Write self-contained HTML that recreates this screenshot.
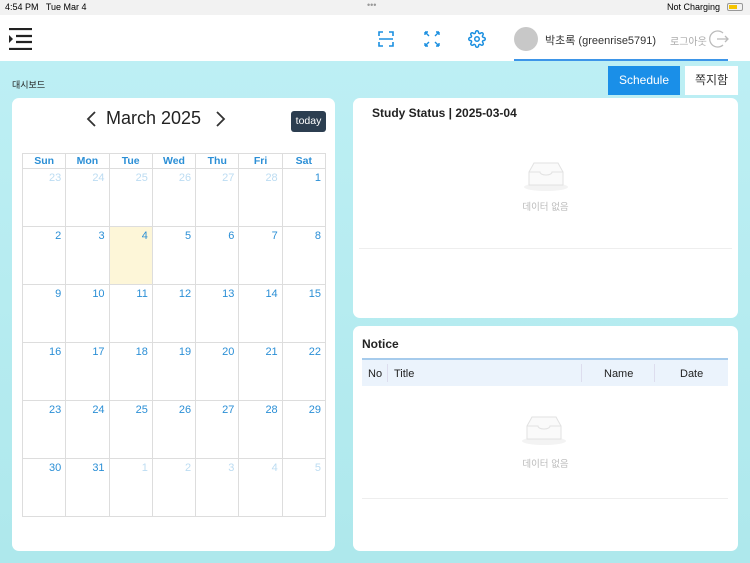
<!DOCTYPE html>
<html><head><meta charset="utf-8"><style>
*{margin:0;padding:0;box-sizing:border-box}
body{width:750px;height:563px;overflow:hidden;font-family:"Liberation Sans","Noto Sans CJK KR",sans-serif;background:linear-gradient(180deg,#bdeff4 60px,#aee8ec 563px);position:relative}
.status{position:absolute;left:0;top:0;width:750px;height:15px;background:#f2f2f2;font-size:9px;color:#000}
.top{position:absolute;left:0;top:15px;width:750px;height:46px;background:#fff}
.card{position:absolute;background:#fff;border-radius:7px}
.ab{position:absolute}
table{border-collapse:collapse}
.cal td{border:1px solid #ddd;width:43.3px;height:58px;vertical-align:top;text-align:right;padding:3px 4px;font-size:11px;color:#2b8fd6}
.cal th{border:1px solid #ddd;height:15px;font-size:10.5px;color:#2b8fd6;font-weight:bold}
.cal td.o{color:#bcdcf2}
.empty{position:absolute;text-align:center;font-size:9.5px;color:#bbb}
</style></head><body>
<div class="status"><span class="ab" style="left:5px;top:2px">4:54 PM &nbsp; Tue Mar 4</span><span class="ab" style="left:367px;top:0;color:#999">•••</span><span class="ab" style="left:667px;top:2px">Not Charging</span><span class="ab" style="left:727px;top:3px;width:16px;height:8px;border:1px solid #999;border-radius:2px;padding:1px"><span style="display:block;width:8px;height:100%;background:#f5c400"></span></span></div>
<div class="top">
<svg class="ab" style="left:9px;top:13px" width="24" height="22"><path d="M0 1h23M7 8h16M7 14h16M0 21h23" stroke="#222" stroke-width="2.2"/><path d="M0 7l4 4-4 4z" fill="#222"/></svg>
<svg class="ab" style="left:378px;top:16px" width="16" height="16" fill="none" stroke="#1a8fe0" stroke-width="1.6"><path d="M1 5V1h4M11 1h4v4M1 11v4h4M11 15h4v-4M1 8h14"/></svg>
<svg class="ab" style="left:424px;top:16px" width="16" height="16" fill="none" stroke="#1a8fe0" stroke-width="1.4"><path d="M1 1l4 4M1 1v3M1 1h3M15 1l-4 4M15 1v3M15 1h-3M1 15l4-4M1 15v-3M1 15h3M15 15l-4-4M15 15v-3M15 15h-3"/></svg>
<svg class="ab" style="left:468px;top:15px" width="18" height="18" viewBox="0 0 24 24" fill="none" stroke="#1a8fe0" stroke-width="2"><circle cx="12" cy="12" r="3"/><path d="M19.4 15a1.65 1.65 0 0 0 .33 1.82l.06.06a2 2 0 1 1-2.83 2.83l-.06-.06a1.65 1.65 0 0 0-1.82-.33 1.65 1.65 0 0 0-1 1.51V21a2 2 0 1 1-4 0v-.09A1.65 1.65 0 0 0 9 19.4a1.65 1.65 0 0 0-1.82.33l-.06.06a2 2 0 1 1-2.83-2.83l.06-.06A1.65 1.65 0 0 0 4.68 15a1.65 1.65 0 0 0-1.51-1H3a2 2 0 1 1 0-4h.09A1.65 1.65 0 0 0 4.6 9a1.65 1.65 0 0 0-.33-1.82l-.06-.06a2 2 0 1 1 2.83-2.83l.06.06A1.65 1.65 0 0 0 9 4.68 1.65 1.65 0 0 0 10 3.17V3a2 2 0 1 1 4 0v.09a1.65 1.65 0 0 0 1 1.51 1.65 1.65 0 0 0 1.82-.33l.06-.06a2 2 0 1 1 2.83 2.83l-.06.06A1.65 1.65 0 0 0 19.4 9a1.65 1.65 0 0 0 1.51 1H21a2 2 0 1 1 0 4h-.09a1.65 1.65 0 0 0-1.51 1z"/></svg>
<div class="ab" style="left:514px;top:12px;width:24px;height:24px;border-radius:50%;background:#c8c8c8"></div>
<div class="ab" style="left:545px;top:17px;font-size:11px;color:#333">박초록 (greenrise5791)</div>
<div class="ab" style="left:670px;top:18px;font-size:10px;color:#aaa">로그아웃</div>
<svg class="ab" style="left:709px;top:14px" width="20" height="20" fill="none" stroke="#bbb" stroke-width="1.3"><path d="M14 4A8 8 0 1 0 14 16M8 10h11M16 7l3 3-3 3"/></svg>
<div class="ab" style="left:514px;top:44px;width:214px;height:2px;background:#3d95e8"></div>
</div>
<div class="ab" style="left:12px;top:78px;font-size:9px;color:#222">대시보드</div>
<div class="ab" style="left:608px;top:66px;width:72px;height:29px;background:#1a8fe8;color:#fff;font-size:12px;text-align:center;line-height:29px">Schedule</div>
<div class="ab" style="left:685px;top:66px;width:53px;height:29px;background:#fff;color:#333;font-size:12px;text-align:center;line-height:29px">쪽지함</div>

<div class="card" style="left:12px;top:98px;width:323px;height:453px">
<svg class="ab" style="left:74px;top:13px" width="12" height="16" fill="none" stroke="#333" stroke-width="1.8"><path d="M9 1L2 8l7 7"/></svg>
<div class="ab" style="left:94px;top:10px;font-size:18px;color:#222">March 2025</div>
<svg class="ab" style="left:202px;top:13px" width="12" height="16" fill="none" stroke="#333" stroke-width="1.8"><path d="M3 1l7 7-7 7"/></svg>
<div class="ab" style="left:279px;top:13px;width:35px;height:21px;background:#2c3e50;color:#fff;font-size:10.5px;text-align:center;line-height:20px;border-radius:3px">today</div>
<table class="cal ab" style="left:10px;top:55px;width:304px">
<tr><th>Sun</th><th>Mon</th><th>Tue</th><th>Wed</th><th>Thu</th><th>Fri</th><th>Sat</th></tr>
<tr><td class="o">23</td><td class="o">24</td><td class="o">25</td><td class="o">26</td><td class="o">27</td><td class="o">28</td><td>1</td></tr>
<tr><td>2</td><td>3</td><td style="background:#fdf6d8">4</td><td>5</td><td>6</td><td>7</td><td>8</td></tr>
<tr><td>9</td><td>10</td><td>11</td><td>12</td><td>13</td><td>14</td><td>15</td></tr>
<tr><td>16</td><td>17</td><td>18</td><td>19</td><td>20</td><td>21</td><td>22</td></tr>
<tr><td>23</td><td>24</td><td>25</td><td>26</td><td>27</td><td>28</td><td>29</td></tr>
<tr><td>30</td><td>31</td><td class="o">1</td><td class="o">2</td><td class="o">3</td><td class="o">4</td><td class="o">5</td></tr>
</table>
</div>

<div class="card" style="left:353px;top:98px;width:385px;height:220px">
<div class="ab" style="left:19px;top:8px;font-size:12px;font-weight:bold;color:#222">Study Status | 2025-03-04</div>
<svg class="ab" style="left:170px;top:62px" width="46" height="32"><ellipse cx="23" cy="27" rx="22" ry="4" fill="#f3f3f3"/><path d="M6 12l5-9h24l5 9v13H6z" fill="#fafafa" stroke="#e2e2e2"/><path d="M6 12h11c0 4 12 4 12 0h11" fill="none" stroke="#e2e2e2"/></svg>
<div class="empty" style="left:0;width:385px;top:101px">데이터 없음</div>
<div class="ab" style="left:6px;top:150px;width:373px;height:1px;background:#eee"></div>
</div>

<div class="card" style="left:353px;top:326px;width:385px;height:225px">
<div class="ab" style="left:9px;top:11px;font-size:12px;font-weight:bold;color:#222">Notice</div>
<div class="ab" style="left:9px;top:32px;width:366px;height:28px;background:#ebf3fc;border-top:2px solid #a6cbec;font-size:11px;color:#222">
<span class="ab" style="left:6px;top:8px">No</span><span class="ab" style="left:25px;top:4px;width:1px;height:18px;background:#dde"></span>
<span class="ab" style="left:32px;top:8px">Title</span><span class="ab" style="left:219px;top:4px;width:1px;height:18px;background:#dde"></span>
<span class="ab" style="left:242px;top:8px">Name</span><span class="ab" style="left:292px;top:4px;width:1px;height:18px;background:#dde"></span>
<span class="ab" style="left:318px;top:8px">Date</span></div>
<svg class="ab" style="left:168px;top:88px" width="46" height="32"><ellipse cx="23" cy="27" rx="22" ry="4" fill="#f3f3f3"/><path d="M6 12l5-9h24l5 9v13H6z" fill="#fafafa" stroke="#e2e2e2"/><path d="M6 12h11c0 4 12 4 12 0h11" fill="none" stroke="#e2e2e2"/></svg>
<div class="empty" style="left:0;width:385px;top:130px">데이터 없음</div>
<div class="ab" style="left:9px;top:172px;width:366px;height:1px;background:#eee"></div>
</div>
</body></html>
